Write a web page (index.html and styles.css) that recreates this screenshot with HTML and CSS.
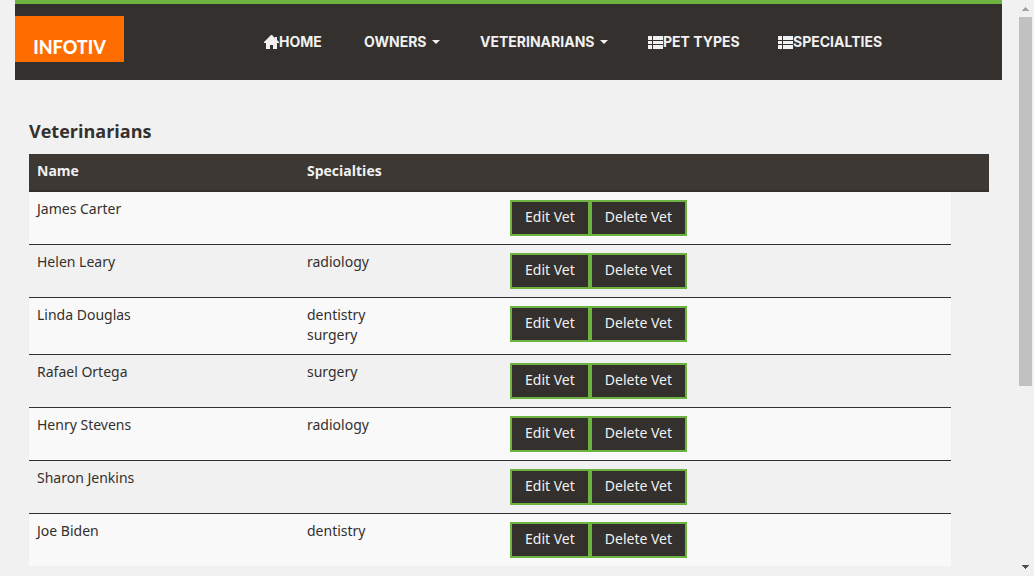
FILE: index.html
```html
<!DOCTYPE html>
<html lang="en">
<head>
<meta charset="utf-8">
<title>Veterinarians</title>
<link rel="stylesheet" href="styles.css">
</head>
<body>
<svg class="sprite" aria-hidden="true">
  <symbol id="home" viewBox="0 0 15 14"><path d="M7 0h1l3 3V2h2v3l2 2v1h-2v6H9v-4H6v4H2V8H0V7z"/></symbol>
  <symbol id="list" viewBox="0 0 15 13"><path d="M0 0h4v4H0zM5 0h10v4H5zM0 5h4v3H0zM5 5h10v3H5zM0 9h4v4H0zM5 9h10v4H5z"/></symbol>
</svg>
<div class="page">
  <div class="content">
    <header class="navbar">
      <a class="logo" href="#">INFOTIV</a>
      <nav class="nav">
        <a href="#"><svg class="icon home"><use href="#home"/></svg>HOME</a>
        <a href="#">OWNERS<span class="caret"></span></a>
        <a href="#">VETERINARIANS<span class="caret"></span></a>
        <a href="#"><svg class="icon list"><use href="#list"/></svg>PET TYPES</a>
        <a href="#"><svg class="icon list"><use href="#list"/></svg>SPECIALTIES</a>
      </nav>
    </header>
    <main class="main">
      <h2 class="title">Veterinarians</h2>
      <table class="vets">
        <colgroup><col class="col-name"><col class="col-spec"><col><col class="col-end"></colgroup>
        <thead><tr><th>Name</th><th>Specialties</th><th></th><th></th></tr></thead>
        <tbody>
          <tr><td>James Carter</td><td></td><td class="buttons"><div class="actions"><button type="button">Edit Vet</button><button type="button">Delete Vet</button></div></td></tr>
          <tr><td>Helen Leary</td><td>radiology</td><td class="buttons"><div class="actions"><button type="button">Edit Vet</button><button type="button">Delete Vet</button></div></td></tr>
          <tr><td>Linda Douglas</td><td><div>dentistry</div><div>surgery</div></td><td class="buttons"><div class="actions"><button type="button">Edit Vet</button><button type="button">Delete Vet</button></div></td></tr>
          <tr><td>Rafael Ortega</td><td>surgery</td><td class="buttons"><div class="actions"><button type="button">Edit Vet</button><button type="button">Delete Vet</button></div></td></tr>
          <tr><td>Henry Stevens</td><td>radiology</td><td class="buttons"><div class="actions"><button type="button">Edit Vet</button><button type="button">Delete Vet</button></div></td></tr>
          <tr><td>Sharon Jenkins</td><td></td><td class="buttons"><div class="actions"><button type="button">Edit Vet</button><button type="button">Delete Vet</button></div></td></tr>
          <tr><td>Joe Biden</td><td>dentistry</td><td class="buttons"><div class="actions"><button type="button">Edit Vet</button><button type="button">Delete Vet</button></div></td></tr>
        </tbody>
      </table>
    </main>
  </div>
  <div class="scrollbar" aria-hidden="true">
    <svg class="arrow up" viewBox="0 0 7 4"><path d="M3 0h1v1h1v1h1v1h1v1H0V3h1V2h1V1h1z"/></svg>
    <div class="track"><div class="thumb"></div></div>
    <svg class="arrow down" viewBox="0 0 7 4"><path d="M0 0h7v1H6v1H5v1H4v1H3V3H2V2H1V1H0z"/></svg>
  </div>
</div>
</body>
</html>
```
FILE: styles.css
```css
* { box-sizing: border-box; }
body {
  margin: 0;
  background: #f1f1f1;
  color: #34302d;
  font: 14px/20px "Noto Sans", sans-serif;
}
.sprite { display: none; }
.page { display: flex; min-height: 100vh; }
.content { flex: 1; min-width: 0; padding: 0 15px; }
.navbar {
  display: flex;
  align-items: flex-start;
  gap: 140px;
  height: 80px;
  border-top: 4px solid #6db33f;
  background: #34302d;
}
.logo {
  width: 109px;
  height: 46px;
  margin-top: 12px;
  padding-top: 20px;
  background: #ff6d00;
  color: #fff;
  font: 900 18px/22px Lato, sans-serif;
  text-align: center;
  text-decoration: none;
}
.nav {
  display: grid;
  grid-template-columns: 60px 76px 128px 90px 105px;
  column-gap: 40px;
  margin-top: 28px;
}
.nav a {
  display: flex;
  align-items: center;
  color: #f1f1f1;
  font: bold 14px/20px Inter, sans-serif;
  text-decoration: none;
  white-space: nowrap;
}
.icon { flex: none; width: 15px; fill: #f1f1f1; }
.home { height: 14px; }
.list { height: 13px; }
.caret {
  margin-left: auto;
  border: 4px solid transparent;
  border-top-color: #f1f1f1;
  border-bottom: 0;
}
.main { padding: 39px 13px 10px 14px; }
.title { margin: 0 0 11px; font: bold 18px/24px "Open Sans", sans-serif; }
.vets { width: 100%; table-layout: fixed; border-collapse: separate; border-spacing: 0; }
.col-name { width: 270px; }
.col-spec { width: 203px; }
.col-end { width: 38px; }
.vets th {
  height: 38px;
  padding: 7px 8px 9px;
  border-bottom: 2px solid #34302d;
  background: #3d3833;
  color: #f1f1f1;
  font-family: "Open Sans", sans-serif;
  text-align: left;
  vertical-align: top;
}
.vets td { padding: 7px 8px 9px; border-top: 1px solid #34302d; vertical-align: top; }
.vets td.buttons { padding: 8px; }
.vets tbody tr:first-child td { border-top: 0; }
.vets tbody tr:nth-child(odd) td { background: #f9f9f9; }
.actions { display: flex; }
.actions button {
  height: 36px;
  padding: 0 13px 2px;
  border: 2px solid #6db33f;
  border-radius: 0;
  background: #34302d;
  color: #f1f1f1;
  font: 14px/20px "Noto Sans", sans-serif;
}
.scrollbar {
  position: sticky;
  top: 0;
  display: flex;
  flex-direction: column;
  align-items: center;
  width: 17px;
  height: 100vh;
  padding: 7px 0;
}
.arrow { width: 7px; height: 4px; }
.up { fill: #a3a3a3; }
.down { fill: #505050; }
.track { flex: 1; width: 13px; margin: 6px 0; }
.thumb { height: 68%; background: #c1c1c1; }
```
